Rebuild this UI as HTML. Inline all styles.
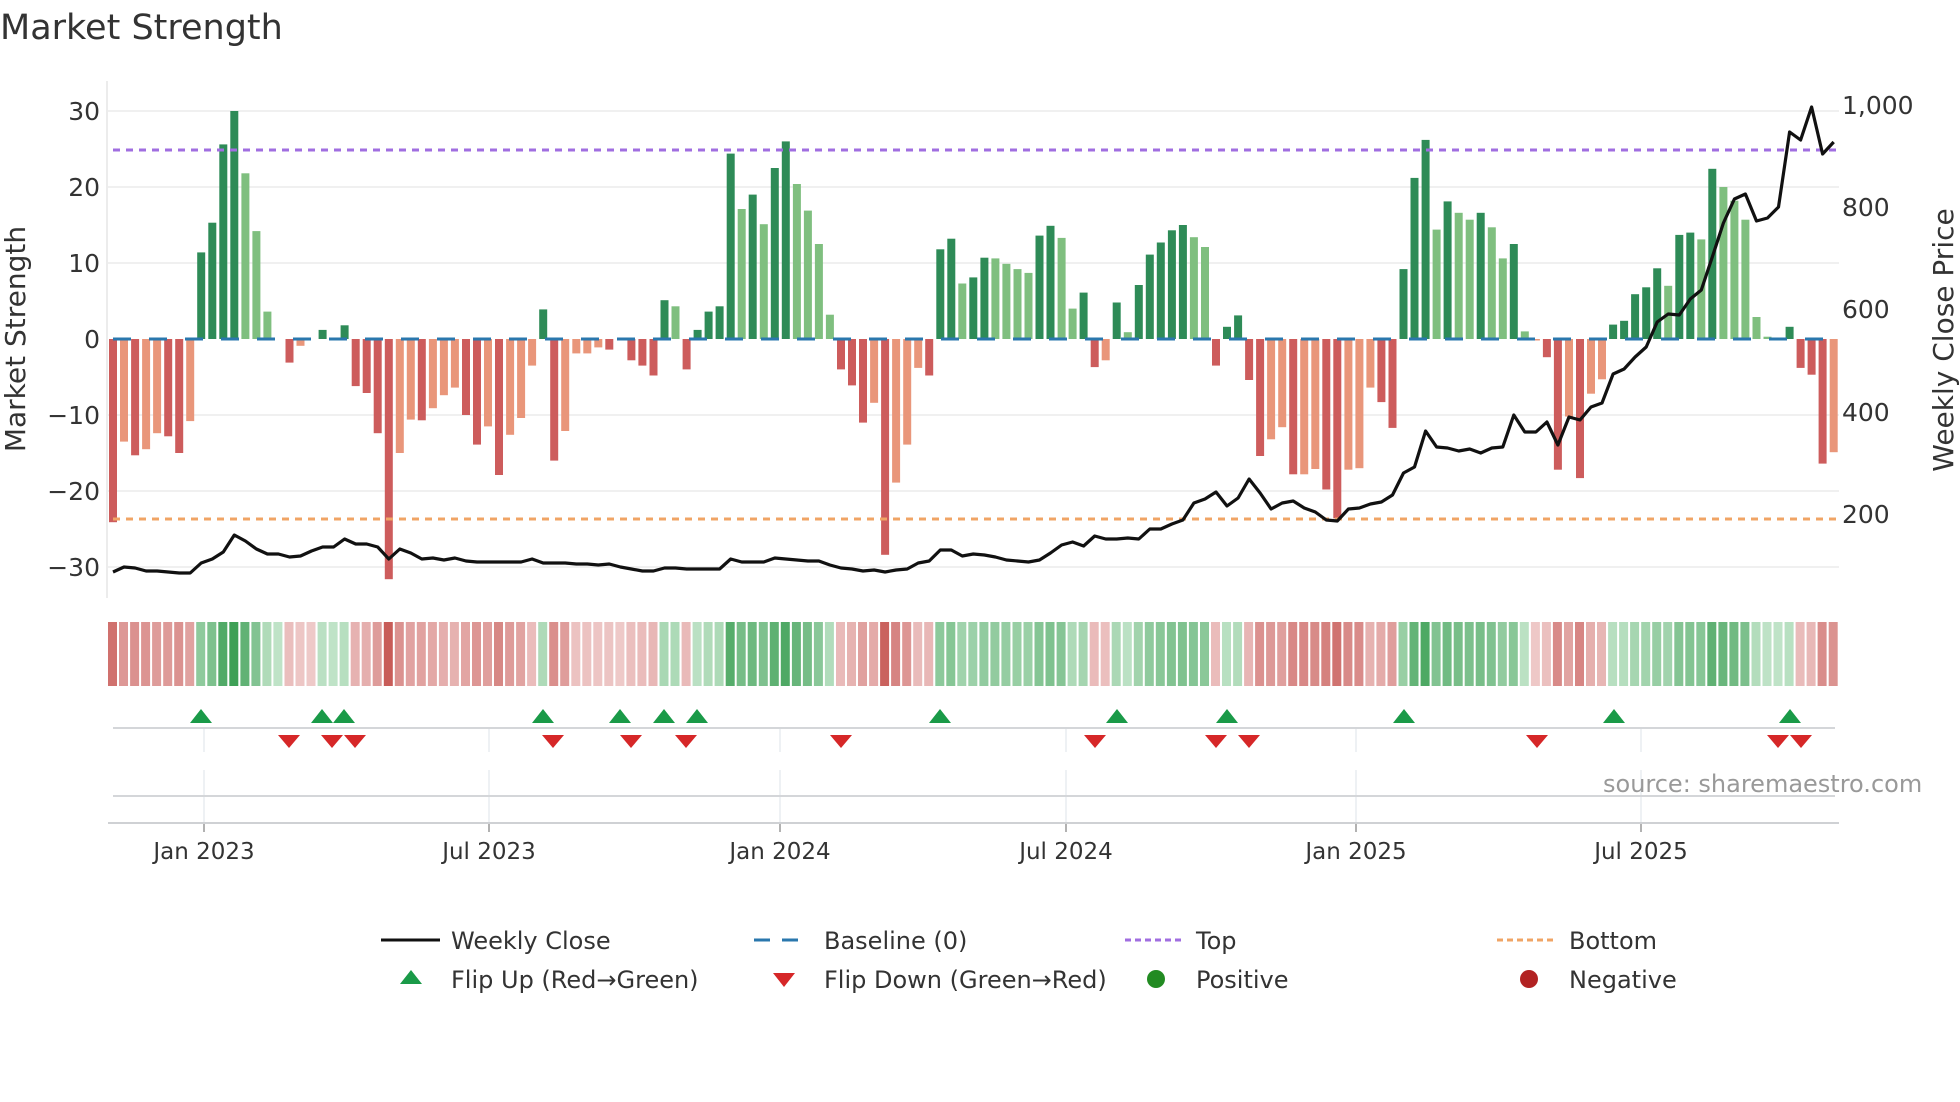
<!DOCTYPE html>
<html><head><meta charset="utf-8">
<style>
html,body{margin:0;padding:0;background:#fff;}
body{width:1960px;height:1102px;overflow:hidden;position:relative;font-family:"DejaVu Sans","Liberation Sans",sans-serif;color:#333;}
svg{position:absolute;left:0;top:0;}
</style></head>
<body>
<svg id="s" width="1960" height="1102" xmlns="http://www.w3.org/2000/svg" font-family="DejaVu Sans, Liberation Sans, sans-serif">
<text x="0" y="39" font-size="35" fill="#333">Market Strength</text>
<g stroke="#ececec" stroke-width="1.5">
<line x1="108" y1="111" x2="1839" y2="111"/><line x1="108" y1="187" x2="1839" y2="187"/><line x1="108" y1="263" x2="1839" y2="263"/>
<line x1="108" y1="415" x2="1839" y2="415"/><line x1="108" y1="491" x2="1839" y2="491"/><line x1="108" y1="567" x2="1839" y2="567"/>
</g>
<line x1="107" y1="81" x2="107" y2="598" stroke="#e6e6e6" stroke-width="1.5"/>
<g font-size="25" fill="#333" text-anchor="end">
<text x="100" y="120">30</text><text x="100" y="196">20</text><text x="100" y="272">10</text><text x="100" y="348">0</text>
<text x="100" y="424">−10</text><text x="100" y="500">−20</text><text x="100" y="576">−30</text>
</g>
<g font-size="25" fill="#333">
<text x="1842" y="114">1,000</text><text x="1842" y="216">800</text><text x="1842" y="318">600</text><text x="1842" y="421">400</text><text x="1842" y="523">200</text>
</g>
<text transform="translate(25,339) rotate(-90)" font-size="28" fill="#333" text-anchor="middle">Market Strength</text>
<text transform="translate(1953,340) rotate(-90)" font-size="28" fill="#333" text-anchor="middle">Weekly Close Price</text>
<g id="bars"></g>
<line x1="113" y1="339" x2="1838" y2="339" stroke="#2a77ad" stroke-width="3" stroke-dasharray="18 18"/>
<line x1="113" y1="150" x2="1838" y2="150" stroke="#a06ee0" stroke-width="3" stroke-dasharray="7 6"/>
<line x1="113" y1="519" x2="1838" y2="519" stroke="#f0a465" stroke-width="3" stroke-dasharray="7 6"/>
<polyline id="price" fill="none" stroke="#111" stroke-width="3.2" stroke-linejoin="round"/>
<g id="heat"></g>
<g stroke="#e8ecf0" stroke-width="1.5" id="vgrid"></g>
<line x1="113" y1="728" x2="1835" y2="728" stroke="#d4d6d9" stroke-width="2"/>
<line x1="113" y1="796" x2="1835" y2="796" stroke="#d4d6d9" stroke-width="2"/>
<line x1="108" y1="823" x2="1839" y2="823" stroke="#cfd1d4" stroke-width="2"/>
<g id="marks"></g>
<text x="1603" y="792" font-size="24" fill="#999">source: sharemaestro.com</text>
<g font-size="23" fill="#333" text-anchor="middle" id="xt">
<text x="204" y="859">Jan 2023</text><text x="489" y="859">Jul 2023</text><text x="780" y="859">Jan 2024</text>
<text x="1066" y="859">Jul 2024</text><text x="1356" y="859">Jan 2025</text><text x="1641" y="859">Jul 2025</text>
</g>
<g font-size="24" fill="#333">
<line x1="381" y1="940" x2="440" y2="940" stroke="#111" stroke-width="3"/>
<text x="451" y="949">Weekly Close</text>
<polygon points="400,984 422,984 411,970" fill="#1a9a48"/>
<text x="451" y="988">Flip Up (Red→Green)</text>
<line x1="754" y1="940" x2="809" y2="940" stroke="#2a77ad" stroke-width="3" stroke-dasharray="16 12"/>
<text x="824" y="949">Baseline (0)</text>
<polygon points="773,973 795,973 784,987" fill="#d62728"/>
<text x="824" y="988">Flip Down (Green→Red)</text>
<line x1="1125" y1="940" x2="1181" y2="940" stroke="#a06ee0" stroke-width="3" stroke-dasharray="6 4"/>
<text x="1196" y="949">Top</text>
<circle cx="1156" cy="979" r="9" fill="#228b22"/>
<text x="1196" y="988">Positive</text>
<line x1="1497" y1="940" x2="1554" y2="940" stroke="#f0a465" stroke-width="3" stroke-dasharray="6 4"/>
<text x="1569" y="949">Bottom</text>
<circle cx="1529" cy="979" r="9" fill="#b22222"/>
<text x="1569" y="988">Negative</text>
</g>
</svg>
<script>
(function(){
var B="D-24.1 L-13.5 D-15.3 L-14.5 L-12.4 D-12.8 D-15 L-10.8 G11.4 G15.3 G25.6 G30 g21.8 g14.2 g3.6 N0 D-3.1 L-0.9 N0 G1.2 N0 G1.8 D-6.2 D-7.1 D-12.4 D-31.6 L-15 L-10.6 D-10.7 L-9.1 L-7.4 L-6.4 D-10 D-13.9 L-11.5 D-17.9 L-12.6 L-10.4 L-3.5 G3.9 "+
"D-16 L-12.1 L-1.9 L-1.9 L-1.1 D-1.4 N0 D-2.8 D-3.5 D-4.8 G5.1 g4.3 D-4 G1.2 G3.6 G4.3 G24.4 g17.1 G19 g15.1 G22.5 G26 g20.4 g16.9 g12.5 g3.2 D-4 D-6.1 D-11 L-8.4 D-28.4 L-18.9 L-13.9 L-3.8 D-4.8 G11.8 G13.2 g7.3 G8.1 G10.7 "+
"g10.6 g9.9 g9.2 g8.7 G13.6 G14.9 g13.3 g4 G6.1 D-3.7 L-2.8 G4.8 g0.9 G7.1 G11.1 G12.7 G14.3 G15 g13.4 g12.1 D-3.5 G1.6 G3.1 D-5.4 D-15.4 L-13.2 L-11.6 D-17.8 L-17.8 L-17.1 D-19.8 D-23.6 L-17.2 L-17 L-6.4 D-8.3 D-11.7 G9.2 G21.2 G26.2 "+
"g14.4 G18.1 g16.6 g15.7 G16.6 g14.7 g10.6 G12.5 g1 L-0.2 D-2.4 D-17.2 L-10.2 D-18.3 L-7.2 L-5.3 G1.9 G2.4 G5.9 G6.8 G9.3 g7 G13.7 G14 g13.1 G22.4 g20 g18.2 g15.7 g2.9 g0.3 N0 G1.6 D-3.8 D-4.7 D-16.4 L-14.9";
var P=[572,567,568,571,571,572,573,573,563,559,552,535,541,549,554,554,557,556,551,547,547,539,544,544,547,559,549,553,559,558,560,558,561,562,562,562,562,562,559,563,
563,563,564,564,565,564,567,569,571,571,568,568,569,569,569,569,559,562,562,562,558,559,560,561,561,565,568,569,571,570,572,570,569,563,561,550,550,556,554,555,
557,560,561,562,560,553,545,542,546,536,539,539,538,539,529,529,524,520,503,499,492,506,498,479,493,509,503,501,508,512,520,521,509,508,504,502,495,473,467,431,
447,448,451,449,453,448,447,415,432,432,422,445,417,420,407,403,374,369,357,347,322,314,315,299,290,257,223,199,194,221,218,207,132,140,107,154,142];
var col={D:"#cd5c5c",L:"#e9967a",G:"#2e8b57",g:"#7fbf7f"};
var ns="http://www.w3.org/2000/svg";
function el(t,a,p){var e=document.createElementNS(ns,t);for(var k in a)e.setAttribute(k,a[k]);p.appendChild(e);return e;}
var items=B.split(" "),bars=document.getElementById("bars"),heat=document.getElementById("heat");
var pts=[],prevSign=-1;
function mix(a,b,t){var r=[];for(var i=0;i<3;i++)r.push(Math.round(a[i]+(b[i]-a[i])*t));return "rgb("+r.join(",")+")";}
for(var i=0;i<items.length;i++){
 var t=items[i][0],v=parseFloat(items[i].slice(1)),x=113+i*11.03;
 if(t!="N"&&v!=0){var y=339-v*7.6,yt=Math.min(y,339),h=Math.abs(y-339);
  el("rect",{x:(x-4).toFixed(1),y:yt.toFixed(1),width:8,height:Math.max(h,1.5).toFixed(1),fill:col[t]},bars);}
 var s=v>0?1:(v<0?-1:prevSign);if(v!=0)prevSign=s;
 var m=Math.min(Math.abs(v)/30,1),tt=0.15+0.85*m;
 var c=s>0?mix([214,239,219],[62,160,86],tt):mix([245,220,220],[200,92,88],tt);
 el("rect",{x:(x-5).toFixed(1),y:622,width:9,height:64,fill:c},heat);
 if(P[i])pts.push(x.toFixed(1)+","+P[i]);
}
document.getElementById("price").setAttribute("points",pts.join(" "));
var vg=document.getElementById("vgrid");
[204,489,780,1066,1356,1641].forEach(function(x){el("line",{x1:x,y1:728,x2:x,y2:752},vg);el("line",{x1:x,y1:770,x2:x,y2:823},vg);
 el("line",{x1:x,y1:823,x2:x,y2:832,stroke:"#999","stroke-width":1.5},vg);});
var mk=document.getElementById("marks");
[201,322,344,543,620,664,697,940,1117,1227,1404,1614,1790].forEach(function(x){el("polygon",{points:(x-11)+",723 "+(x+11)+",723 "+x+",709",fill:"#1a9a48"},mk);});
[289,332,355,553,631,686,841,1095,1216,1249,1537,1778,1801].forEach(function(x){el("polygon",{points:(x-11)+",735 "+(x+11)+",735 "+x+",748",fill:"#d62728"},mk);});
})();
</script>
</body></html>
